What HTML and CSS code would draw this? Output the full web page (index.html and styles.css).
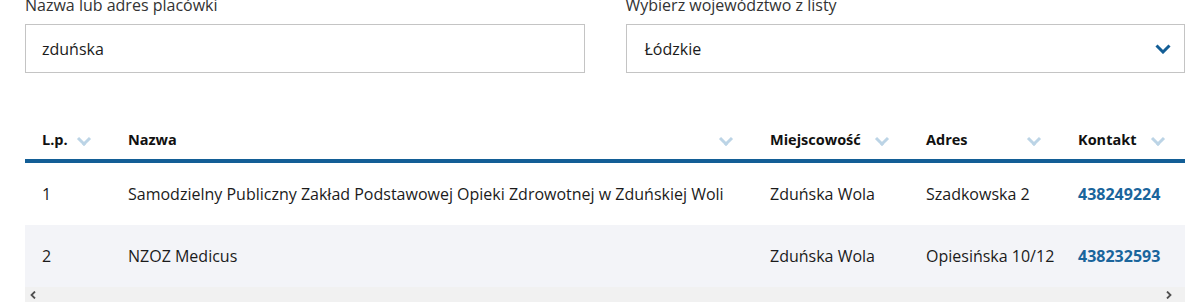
FILE: index.html
```html
<!DOCTYPE html>
<html lang="pl">
<head>
<meta charset="UTF-8" />
<meta name="viewport" content="width=device-width, initial-scale=1" />
<title>Wyszukiwarka placówek</title>
<link rel="stylesheet" href="styles.css">
</head>
<body>
<div class="page">
  <form class="filters">
    <div class="field">
      <label for="q">Nazwa lub adres placówki</label>
      <input id="q" type="text" value="zduńska" />
    </div>
    <div class="field">
      <label for="woj">Wybierz województwo z listy</label>
      <div class="select" id="woj">
        <span>Łódzkie</span>
        <svg class="select-arrow" width="16" height="10" viewBox="0 0 16 10" aria-hidden="true">
          <path d="M1.5 1.5 L8 8 L14.5 1.5" fill="none" stroke="#135e96" stroke-width="3" />
        </svg>
      </div>
    </div>
  </form>

  <div class="table-wrap">
    <table class="results">
      <thead>
        <tr>
          <th class="col-lp"><span>L.p.</span><i class="sort"></i></th>
          <th class="col-name"><span>Nazwa</span><i class="sort"></i></th>
          <th class="col-city"><span>Miejscowość</span><i class="sort"></i></th>
          <th class="col-addr"><span>Adres</span><i class="sort"></i></th>
          <th class="col-contact"><span>Kontakt</span><i class="sort"></i></th>
        </tr>
      </thead>
      <tbody>
        <tr>
          <td>1</td>
          <td>Samodzielny Publiczny Zakład Podstawowej Opieki Zdrowotnej w Zduńskiej Woli</td>
          <td>Zduńska Wola</td>
          <td>Szadkowska 2</td>
          <td><a href="#">438249224</a></td>
        </tr>
        <tr>
          <td>2</td>
          <td>NZOZ Medicus</td>
          <td>Zduńska Wola</td>
          <td>Opiesińska 10/12</td>
          <td><a href="#">438232593</a></td>
        </tr>
      </tbody>
    </table>
    <div class="scrollbar" aria-hidden="true">
      <svg width="6" height="8" viewBox="0 0 6 8"><path d="M5 0.5 L1.5 4 L5 7.5" fill="none" stroke="#505050" stroke-width="1.8" /></svg>
      <svg width="6" height="8" viewBox="0 0 6 8"><path d="M1 0.5 L4.5 4 L1 7.5" fill="none" stroke="#505050" stroke-width="1.8" /></svg>
    </div>
  </div>
</div>
</body>
</html>
```

FILE: styles.css
```css
* {
  margin: 0;
  padding: 0;
  box-sizing: border-box;
}

body {
  font-family: 'Open Sans', 'Noto Sans', sans-serif;
  color: #1b1b1b;
  background: #fff;
  overflow: hidden;
}

.page {
  width: 1160px;
  margin: -6px 0 0 25px;
}

/* Filters */
.filters {
  display: grid;
  grid-template-columns: 1fr 1fr;
  column-gap: 41px;
}

.field label {
  display: block;
  font-size: 16px;
  line-height: 22px;
  color: #333;
  margin-bottom: 8px;
}

.field input,
.select {
  width: 100%;
  height: 49px;
  border: 1px solid #c4c4c4;
  padding: 0 16px;
  font-family: inherit;
  font-size: 16px;
  color: #1b1b1b;
  background: #fff;
  outline: none;
}

.select {
  display: flex;
  align-items: center;
  justify-content: space-between;
  padding-left: 18px;
  padding-right: 13px;
}

/* Table */
.table-wrap {
  margin-top: 44px;
}

.results {
  width: 100%;
  border-collapse: collapse;
  table-layout: fixed;
}

.col-lp { width: 86px; }
.col-name { width: 642px; }
.col-city { width: 156px; }
.col-addr { width: 152px; }
.col-contact { width: 124px; }

.results th {
  position: relative;
  height: 44px;
  padding: 2px 20px 0 17px;
  text-align: left;
  font-size: 14.5px;
  font-weight: 700;
  color: #111;
  border-bottom: 4px solid #135e96;
}

.sort {
  position: absolute;
  right: 20px;
  top: 20px;
  width: 15px;
  height: 9px;
}

.sort::before {
  content: "";
  position: absolute;
  left: 3px;
  top: -3px;
  width: 7px;
  height: 7px;
  border-right: 3px solid #bcd4e6;
  border-bottom: 3px solid #bcd4e6;
  transform: rotate(45deg);
}

.results td {
  height: 64px;
  padding: 0 17px;
  font-size: 16px;
  color: #1b1b1b;
  white-space: nowrap;
}

.results tbody tr:nth-child(2) td {
  background: #f3f4f8;
  height: 62px;
}

.results a {
  color: #1a659c;
  font-weight: 700;
  text-decoration: none;
}

.scrollbar {
  display: flex;
  justify-content: space-between;
  align-items: flex-start;
  height: 15px;
  background: #f1f1f1;
  padding: 4px 13px 0 5px;
}
```
